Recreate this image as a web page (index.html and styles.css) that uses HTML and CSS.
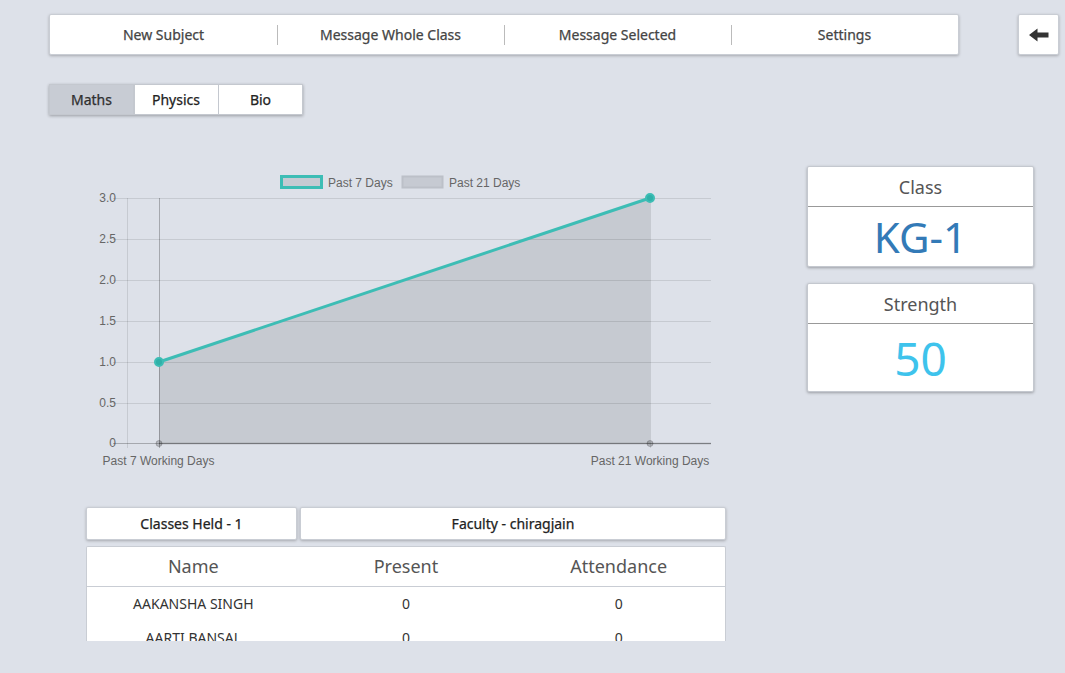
FILE: index.html
```html
<!DOCTYPE html>
<html>
<head>
<meta charset="utf-8">
<link rel="stylesheet" href="styles.css">
</head>
<body>
<div class="page">
  <div class="top-row">
    <nav class="topnav">
      <div class="nav-item">New Subject</div>
      <div class="nav-item">Message Whole Class</div>
      <div class="nav-item">Message Selected</div>
      <div class="nav-item">Settings</div>
    </nav>
    <button class="back-btn" aria-label="Back">
      <svg width="20" height="14" viewBox="0 0 20 14"><path d="M0 7 L8.5 0.5 L8.5 4.5 L19.5 4.5 L19.5 9.5 L8.5 9.5 L8.5 13.5 Z" fill="#333"/></svg>
    </button>
  </div>

  <div class="tabs">
    <div class="tab active">Maths</div>
    <div class="tab">Physics</div>
    <div class="tab">Bio</div>
  </div>

  <div class="content">
    <div class="left-col">
      <svg class="chart" width="640" height="310" viewBox="86 166 640 310">
        <g font-family="Liberation Sans, Arial, sans-serif" font-size="12" fill="#666">
          <rect x="281.5" y="176.5" width="40" height="11" fill="#c6cad2" stroke="#3dbdb5" stroke-width="3"/>
          <text x="328" y="187">Past 7 Days</text>
          <rect x="402.5" y="176.5" width="40" height="11" fill="#c6cad2" stroke="#bcc0c8" stroke-width="2"/>
          <text x="449" y="187">Past 21 Days</text>
          <g text-anchor="end">
            <text x="116" y="202">3.0</text>
            <text x="116" y="243">2.5</text>
            <text x="116" y="284">2.0</text>
            <text x="116" y="325">1.5</text>
            <text x="116" y="366">1.0</text>
            <text x="116" y="407">0.5</text>
            <text x="116" y="447">0</text>
          </g>
          <g text-anchor="middle">
            <text x="158.5" y="465">Past 7 Working Days</text>
            <text x="650" y="465">Past 21 Working Days</text>
          </g>
        </g>
        <g stroke="rgba(0,0,0,0.1)" stroke-width="1">
          <line x1="113" y1="198.5" x2="711" y2="198.5"/>
          <line x1="113" y1="239.5" x2="711" y2="239.5"/>
          <line x1="113" y1="280.5" x2="711" y2="280.5"/>
          <line x1="113" y1="321.5" x2="711" y2="321.5"/>
          <line x1="113" y1="362.5" x2="711" y2="362.5"/>
          <line x1="113" y1="403.5" x2="711" y2="403.5"/>
          <line x1="127.5" y1="198" x2="127.5" y2="448"/>
          <line x1="650.5" y1="198" x2="650.5" y2="448"/>
        </g>
        <g stroke="rgba(0,0,0,0.25)" stroke-width="1">
          <line x1="113" y1="443.5" x2="711" y2="443.5"/>
          <line x1="159.5" y1="198" x2="159.5" y2="448"/>
        </g>
        <polygon points="159,362 650,198 650,443.5 159,443.5" fill="rgba(0,0,0,0.1)"/>
        <line x1="159" y1="443.5" x2="711" y2="443.5" stroke="rgba(0,0,0,0.25)" stroke-width="1.5"/>
        <circle cx="159" cy="443.5" r="3" fill="rgba(0,0,0,0.18)" stroke="rgba(0,0,0,0.2)" stroke-width="1"/>
        <circle cx="650" cy="443.5" r="3" fill="rgba(0,0,0,0.18)" stroke="rgba(0,0,0,0.2)" stroke-width="1"/>
        <line x1="159" y1="362" x2="650" y2="198" stroke="#3dbdb5" stroke-width="3"/>
        <circle cx="159" cy="362" r="4" fill="#2fb0a8" stroke="#3dbdb5" stroke-width="2"/>
        <circle cx="650" cy="198" r="4" fill="#2fb0a8" stroke="#3dbdb5" stroke-width="2"/>
      </svg>

      <div class="info-row">
        <div class="info-box held">Classes Held - 1</div>
        <div class="info-box faculty">Faculty - chiragjain</div>
      </div>

      <div class="table-card">
        <table class="att-table">
          <thead>
            <tr><th>Name</th><th>Present</th><th>Attendance</th></tr>
          </thead>
          <tbody>
            <tr><td>AAKANSHA SINGH</td><td>0</td><td>0</td></tr>
            <tr><td>AARTI BANSAL</td><td>0</td><td>0</td></tr>
            <tr><td>ABHAY KUMAR</td><td>0</td><td>0</td></tr>
          </tbody>
        </table>
      </div>
    </div>

    <div class="right-col">
      <div class="stat-card">
        <div class="stat-head">Class</div>
        <div class="stat-value class-val">KG-1</div>
      </div>
      <div class="stat-card">
        <div class="stat-head">Strength</div>
        <div class="stat-value strength-val">50</div>
      </div>
    </div>
  </div>
</div>
</body>
</html>
```

FILE: styles.css
```css
* { box-sizing: border-box; }

html, body {
  margin: 0;
  padding: 0;
  background: #dde1e9;
  font-family: "Noto Sans", "Open Sans", sans-serif;
  color: #333;
}

.page {
  padding: 14px 0 0 49px;
  height: 673px;
  overflow: hidden;
}

.top-row {
  display: flex;
  align-items: flex-start;
}

.topnav {
  display: flex;
  width: 910px;
  height: 41px;
  background: #fff;
  border: 1px solid #c9cdd4;
  border-radius: 2px;
  box-shadow: 0 1px 3px rgba(0, 0, 0, 0.25);
}

.nav-item {
  flex: 1;
  display: flex;
  align-items: center;
  justify-content: center;
  font-size: 14px;
  color: #444;
  -webkit-text-stroke: 0.25px #444;
  position: relative;
}

.nav-item + .nav-item::before {
  content: "";
  position: absolute;
  left: 0;
  top: 10px;
  bottom: 9px;
  border-left: 1px solid #bbb;
}

.back-btn {
  margin-left: 59px;
  width: 41px;
  height: 41px;
  background: #fff;
  border: 1px solid #c9cdd4;
  border-radius: 2px;
  box-shadow: 0 1px 3px rgba(0, 0, 0, 0.25);
  display: flex;
  align-items: center;
  justify-content: center;
  padding: 0 0 0 1px;
}

.tabs {
  display: flex;
  margin-top: 29px;
  width: max-content;
  box-shadow: 0 1px 3px rgba(0, 0, 0, 0.3);
}

.tab {
  width: 85px;
  height: 31px;
  display: flex;
  align-items: center;
  justify-content: center;
  font-size: 14px;
  color: #222;
  -webkit-text-stroke: 0.25px #222;
  background: #fff;
  border: 1px solid #c4c8cf;
}

.tab + .tab { margin-left: -0.5px; }

.tab.active {
  background: #c8ccd4;
  color: #333;
}

.content {
  display: flex;
  margin-top: 51px;
}

.left-col {
  margin-left: 37px;
  width: 640px;
}

.chart {
  display: block;
}

.info-row {
  display: flex;
  gap: 3px;
  margin-top: 31px;
}

.info-box {
  height: 33px;
  background: #fff;
  border: 1px solid #c9cdd4;
  border-radius: 2px;
  box-shadow: 0 1px 3px rgba(0, 0, 0, 0.25);
  display: flex;
  align-items: center;
  justify-content: center;
  font-size: 14px;
  color: #222;
  -webkit-text-stroke: 0.25px #222;
}

.info-box.held { width: 211px; }
.info-box.faculty { flex: 1; }

.table-card {
  margin-top: 6px;
  height: 95px;
  overflow: hidden;
  background: #fff;
  border: 1px solid #c9cdd4;
  border-bottom: none;
  border-radius: 2px 2px 0 0;
}

.att-table {
  width: 100%;
  border-collapse: collapse;
  table-layout: fixed;
}

.att-table th {
  height: 39px;
  font-size: 18px;
  font-weight: normal;
  color: #555;
  border-bottom: 1px solid #c9cdd4;
  padding: 0;
}

.att-table td {
  height: 34px;
  text-align: center;
  font-size: 14px;
  color: #333;
  padding: 0;
}

.right-col {
  margin-left: 81px;
  margin-top: 0;
  width: 227px;
  display: flex;
  flex-direction: column;
  gap: 16px;
}

.stat-card {
  background: #fff;
  border: 1px solid #c4c8cf;
  border-radius: 2px;
  box-shadow: 0 1px 3px rgba(0, 0, 0, 0.3);
}

.stat-head {
  height: 40px;
  display: flex;
  align-items: center;
  justify-content: center;
  font-size: 18px;
  color: #555;
  border-bottom: 1px solid #999;
}

.stat-value {
  display: flex;
  align-items: center;
  justify-content: center;
}

.class-val {
  height: 59px;
  font-size: 42px;
  color: #337ab7;
}

.strength-val {
  height: 67px;
  font-size: 46px;
  color: #3ec3ec;
}
```
